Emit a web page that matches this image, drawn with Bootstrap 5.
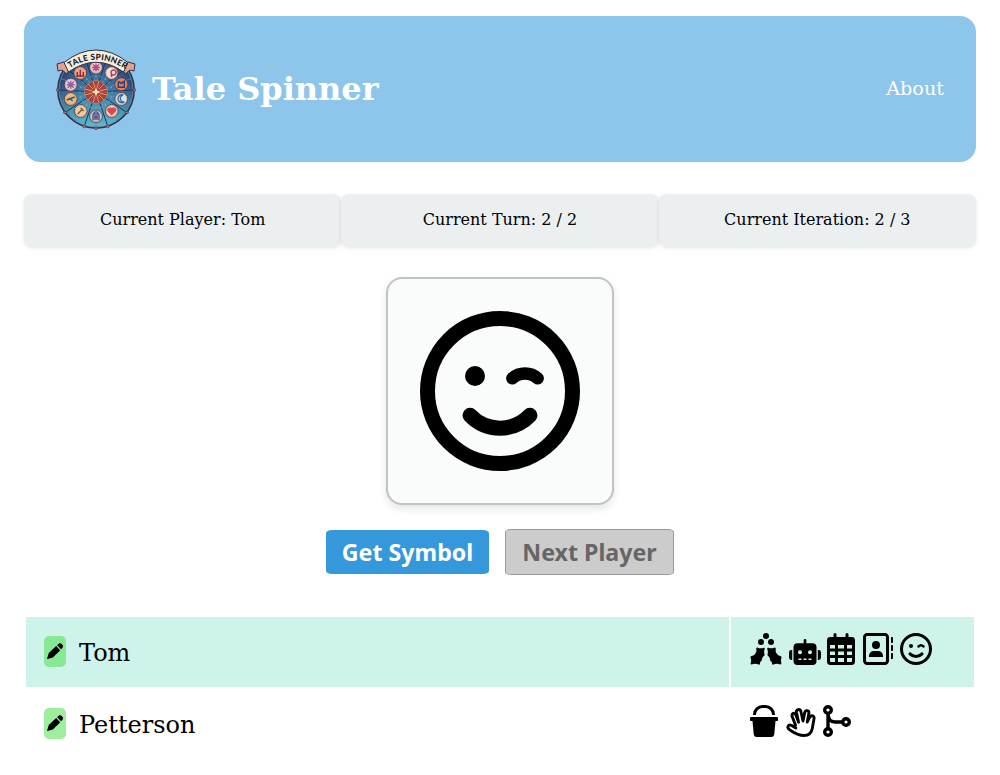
<!DOCTYPE html>
<html lang="en">
<head>
<meta charset="utf-8">
<title>Tale Spinner</title>
<link href="https://cdn.jsdelivr.net/npm/bootstrap@5.3.0/dist/css/bootstrap.min.css" rel="stylesheet">
<style>
body{font-family:"DejaVu Serif",serif;color:#000;background:#fff;overflow:hidden}
svg{display:block;flex:none}
.page{padding:16px 24px 0}
.top-bar{height:146px;background:#8ec5eb;border-radius:16px;padding:0 32px;color:#fff}
.top-bar h1{font-size:32px;font-weight:700;margin:0 0 0 16px}
.top-bar a{font-size:19.2px;color:#fff}
.status{margin-top:32px}
.status>div{height:51.5px;background:#ebeff0;border-radius:8px;box-shadow:0 2px 4px rgba(0,0,0,.1);font-size:16px;line-height:51px}
.symbol{width:228px;height:228px;margin:31.5px auto 0;border:2px solid #bdc3c7;border-radius:16px;background:#fafcfc;box-shadow:0 4px 8px rgba(0,0,0,.1)}
.actions{margin-top:24px;gap:16px}
.act{font:700 23.2px/44px "Noto Sans",sans-serif;padding:0;border:0;border-radius:6px/3px;text-align:center;white-space:nowrap}
.act-get{width:163px;height:44px;background:#3498db;color:#fff}
.act-next{width:169px;height:46px;background:#ccc;color:#666;border:1px solid #999}
.players{margin:42px 2px 0;display:grid;grid-template-columns:703px 243px;gap:2px}
.players>div{height:70px;padding:0 18px;font-size:24px}
.turn{background:#cef3ea}
.edit{width:22px;height:31px;border-radius:5px;background:#9eee9e;margin:-2px 13px 0 0}
.turn .edit{background:#87e994}
.who{padding-top:2px}
</style>
</head>
<body>
<svg width="0" height="0" class="position-absolute">
<defs>
<symbol id="wink" viewBox="0 0 160 160"><g fill="none" stroke="#000" stroke-linecap="round" stroke-width="15"><circle cx="80" cy="80" r="72.5"/><path d="M50 104.3a41.5 41.5 0 0 0 60 0"/><path stroke-width="12.5" d="M92.3 67.3a19 19 0 0 1 25.4 0"/></g><circle cx="55" cy="65" r="10"/></symbol>
<symbol id="pencil" viewBox="0 0 18 18"><path d="M.3 17.600Q0 17.600.2 16.800L1.500 12.200Q1.700 11.300 2.400 10.600L9.700 3.800 14 8.100 7 15.100Q6.300 15.900 5.400 16.200zM10.700 2.900l1-1a2.900 2.900 0 0 1 4.200 4.200l-1 1z"/></symbol>
</defs>
</svg>
<main class="page">
<header class="top-bar d-flex align-items-center">
<svg width="80" height="84" viewBox="0 0 80 84" id="logo">
<defs>
<radialGradient id="sky"><stop offset="0" stop-color="#3d7ba6"/><stop offset=".6" stop-color="#38699a"/><stop offset="1" stop-color="#2c4573"/></radialGradient>
<linearGradient id="sea" x2="0" y2="1"><stop offset=".4" stop-color="#58c7d5" stop-opacity="0"/><stop offset="1" stop-color="#65d2dc" stop-opacity=".85"/></linearGradient>
<path id="arc" d="M13 21.500Q40 4 68.500 21.500"/>
</defs>
<g><circle cx="40" cy="43" r="39" fill="#293354"/><circle cx="40" cy="43" r="37" fill="url(#sky)"/><circle cx="40" cy="43" r="37" fill="url(#sea)" stroke="#8296ae" stroke-width=".7"/></g>
<g id="spokes"></g>
<g id="medals"></g>
<path d="M1 17 8 15 14 21 11 27 6 23 2 24zM79 17 72 15 66 21 69 27 74 23 78 24z" fill="#e0a48c" stroke="#32314c"/>
<path d="M8 15.500Q40-9.500 72 15.500L67.500 25Q40 5.500 12.500 25z" fill="#f8edda" stroke="#322f49" stroke-width="1"/>
<text font-family="Lato,sans-serif" font-weight="900" font-size="8.200" fill="#16182b"><textPath href="#arc" textLength="59" startOffset="1">TALE SPINNER</textPath></text>
</svg>
<h1>Tale Spinner</h1>
<a class="ms-auto text-decoration-none" href="#">About</a>
</header>
<section class="status d-flex text-center"><div class="flex-fill w-100">Current Player: Tom</div><div class="flex-fill w-100">Current Turn: 2 / 2</div><div class="flex-fill w-100">Current Iteration: 2 / 3</div></section>
<div class="symbol d-flex align-items-center justify-content-center"><svg width="160" height="160"><use href="#wink"/></svg></div>
<div class="actions d-flex justify-content-center align-items-center"><button class="act act-get">Get Symbol</button><button class="act act-next" disabled>Next Player</button></div>
<section class="players">
<div class="turn d-flex align-items-center"><span class="edit d-flex align-items-center justify-content-center"><svg width="17" height="18"><use href="#pencil"/></svg></span><span class="who">Tom</span></div>
<div class="turn d-flex align-items-center">
<svg width="32" height="32" viewBox="0 0 32 32" style="margin:-6px 7px 0 1px"><circle cx="16" cy="3" r="3"/><circle cx="11" cy="9" r="3"/><circle cx="21" cy="9" r="3"/><path id="leaf" d="M6.300 15.200Q6.800 14.300 8 14.700 10.800 15.800 13.500 14.700 14.800 14.500 14.800 15.700 13.600 18.500 14.500 21.300 14.700 22.700 13.500 23.200 11.900 24.500 12 26.500 11.900 28.200 10.300 28.800 10 30 10 31.200 9.300 31.900 7 31 4.300 30.500 1.500 31.600.3 31.400.7 30 1.800 27.500.5 24.800.2 23.200 1.500 22.900 4.500 22.800 5.300 20.500 6.800 19 6.300 17z"/><use href="#leaf" transform="matrix(-1 0 0 1 32 0)"/></svg>
<svg width="32" height="32" viewBox="0 0 32 32" style="margin:-6px 6px 0 0"><rect x="14.700" y="6" width="2.600" height="6" rx="1.200"/><rect x="4.500" y="10.200" width="23" height="21.800" rx="4"/><path d="M3.200 17v10H2.400A2.400 2.400 0 0 1 0 24.600v-5.200A2.400 2.400 0 0 1 2.400 17zM28.800 17v10h.8a2.400 2.400 0 0 0 2.400-2.400v-5.200a2.400 2.400 0 0 0-2.400-2.400z"/><g fill="#cef3ea"><circle cx="11" cy="19.200" r="2"/><circle cx="21" cy="19.200" r="2"/><path d="M9.500 25.500h3v1.600h-3zM14.500 25.500h3v1.600h-3zM19.500 25.500h3v1.600h-3z"/></g></svg>
<svg width="28" height="32" viewBox="0 0 28 32" style="margin:-6px 8px 0 0"><path fill-rule="evenodd" d="M3.400 4H6.500V1.500a1.500 1.500 0 0 1 3 0V4h9V1.500a1.500 1.500 0 0 1 3 0V4h3.100A3.400 3.400 0 0 1 28 7.400v21.200a3.400 3.400 0 0 1-3.400 3.400H3.400A3.400 3.400 0 0 1 0 28.600V7.400A3.400 3.400 0 0 1 3.400 4zM3 12v3.500h5V12zM11 12v3.500h6V12zM20 12v3.500h5V12zM3 18.500v3.500h5v-3.500zM11 18.500v3.500h6v-3.500zM20 18.500v3.500h5v-3.500zM3 25v3a1 1 0 0 0 1 1h4v-4zM11 25v4h6v-4zM20 25v4h4a1 1 0 0 0 1-1v-3z"/></svg>
<svg width="31" height="32" viewBox="0 0 31 32" style="margin:-6px 6px 0 0"><rect x="1.500" y="1.500" width="23" height="29" rx="2.700" fill="none" stroke="#000" stroke-width="3"/><circle cx="13" cy="12" r="4"/><path d="M6 24v-1.300A4.700 4.700 0 0 1 10.700 18h4.600a4.700 4.700 0 0 1 4.700 4.700V24zM28 4h1a1 1 0 0 1 1 1v4a1 1 0 0 1-1 1h-1zM28 12h1a1 1 0 0 1 1 1v4a1 1 0 0 1-1 1h-1zM28 20h1a1 1 0 0 1 1 1v4a1 1 0 0 1-1 1h-1z"/></svg>
<svg width="32" height="32" style="margin-top:-6px"><use href="#wink"/></svg>
</div>
<div class="d-flex align-items-center"><span class="edit d-flex align-items-center justify-content-center"><svg width="17" height="18"><use href="#pencil"/></svg></span><span class="who">Petterson</span></div>
<div class="d-flex align-items-center">
<svg width="28" height="32" viewBox="0 0 28 32" style="margin:-6px 8px 0 1px"><path fill="none" stroke="#000" stroke-width="3" d="M4.500 10V9.500a8 8 0 0 1 8-8h3a8 8 0 0 1 8 8V10"/><path d="M1.500 12h25a1.500 1.500 0 0 1 0 4h-1L24.300 29a3.200 3.200 0 0 1-3.200 3H6.900a3.200 3.200 0 0 1-3.200-3L2.500 16h-1a1.500 1.500 0 0 1 0-4z"/></svg>
<svg width="30" height="32" viewBox="0 0 30 32" style="margin:-6px 7px 0 0"><path fill="none" stroke="#000" stroke-width="2.900" stroke-linejoin="round" stroke-linecap="round" d="M9.500 20.200 6.200 11.500C5.100 8.200 8.800 7 9.900 10L12.600 17.200 10.500 7.500C9.900 4.300 14 3.400 14.900 6.500L17 16 18.700 7.600C19.500 4.500 23.500 5.300 22.800 8.600L21.200 17 23.800 12C25.200 9.600 28.700 11 28 13.800L26.300 23.500C25.500 28 22.300 30.500 18 30.500 12.500 30.500 8.500 28 5 25.700L3.100 24.300C.7 22.400 2.300 18.900 5.200 20.300L9.800 23"/></svg>
<svg width="28" height="32" viewBox="0 0 28 32" style="margin-top:-6px"><g fill="none" stroke="#000" stroke-width="3.400"><circle cx="5" cy="5" r="3.300"/><circle cx="5" cy="27" r="3.300"/><circle cx="23" cy="17" r="3.300"/><path d="M5 8v16M5 8.500C5 14 7.500 17 12 17H20"/></g></svg>
</div>
</section>
</main>
<script>
// Radial ornaments of the story wheel
const ns='http://www.w3.org/2000/svg';
function add(parent,tag,attrs){const e=document.createElementNS(ns,tag);for(const k in attrs)e.setAttribute(k,attrs[k]);parent.appendChild(e);return e}
const spokes=document.getElementById('spokes'),medals=document.getElementById('medals');
for(let i=0;i<20;i++){
 const a=i*18*Math.PI/180,x=Math.cos(a),y=Math.sin(a);
 add(spokes,'path',{d:`M40 45L${40+37*x} ${43+37*y}`,stroke:i%2?'#5d8fb4':'#1c3560','stroke-width':i%2?.7:1});
 if(i%2===0||i===5||i===15)add(spokes,'circle',{cx:40+38.3*x,cy:43+38.3*y,r:1.4,fill:'#bd6f76',stroke:'#28304d','stroke-width':.6});
 add(spokes,'circle',{cx:40+16*x,cy:45+16*y,r:.6,fill:'#d5ae9b'});
}
add(spokes,'circle',{cx:40,cy:45,r:11.5,fill:'#8c3f47',stroke:'#e09b65','stroke-width':.6});
for(let i=0;i<24;i++){const a=i*15*Math.PI/180;add(spokes,'path',{d:`M40 45L${40+11*Math.cos(a)} ${45+11*Math.sin(a)}`,stroke:i%2?'#eaa35e':'#c94e4a','stroke-width':1})}
add(spokes,'circle',{cx:40,cy:45,r:4.5,fill:'#b34a45'});
add(spokes,'path',{d:'M40 40.5 41.3 43.7 44.5 45 41.3 46.3 40 49.5 38.7 46.3 35.5 45 38.7 43.7z',fill:'#ffe5b5'});
const places=[[40,20.5,'#f1ccd2','M-3-3 3 3M3-3-3 3M0-4V4M-4 0H4','#b34c82'],[55.5,26,'#f6dcd5','M0 4V1M2-3A2.5 2.5 0 1 0 2.1-3','#a7355c'],[65.3,37.3,'#e57a50','M-3-2V3H3V-3L0-1-3-3','#293d75'],[65.3,52,'#cde8f3','M2-4A4 4 0 1 0 3 3A3.5 3.5 0 0 1 2-4','#4564a5'],[55.7,64,'#f2d4b6','M0 3.500-3.500 0A2 2 0 0 1 0-2 2 2 0 0 1 3.500 0z','#d84959'],[40,69.3,'#c5cce2','M-3 4V-2L-1-4V4M3 4V-2L1-4V4M-2 1H2','#4f5282'],[24.7,64,'#f0cc9e','M-3 3 2-2M0-3 3 0','#765252'],[14.7,52,'#eebb7a','M-4 1 4-2M-2-1 2 2','#28568a'],[14.7,37.7,'#f1cbd5','M-3-3 3 3M3-3-3 3M0-4V4M-4 0H4','#8b6499'],[24.3,26,'#f0a276','M-3 4V-1M0 4V-3M3 4V-1M-4 3H4','#892d4c']];
for(const [x,y,fill,d,color] of places){const g=add(medals,'g',{transform:`translate(${x} ${y})`});add(g,'circle',{r:6.4,fill:fill,stroke:'#43344e','stroke-width':.8});add(g,'circle',{r:5.5,fill:'none',stroke:'#d99973','stroke-width':.6});add(g,'path',{d:d,fill:color==='#d84959'?color:'none',stroke:color,'stroke-width':1.4})}
</script>
<script src="https://cdn.jsdelivr.net/npm/bootstrap@5.3.0/dist/js/bootstrap.bundle.min.js"></script>
</body>
</html>
